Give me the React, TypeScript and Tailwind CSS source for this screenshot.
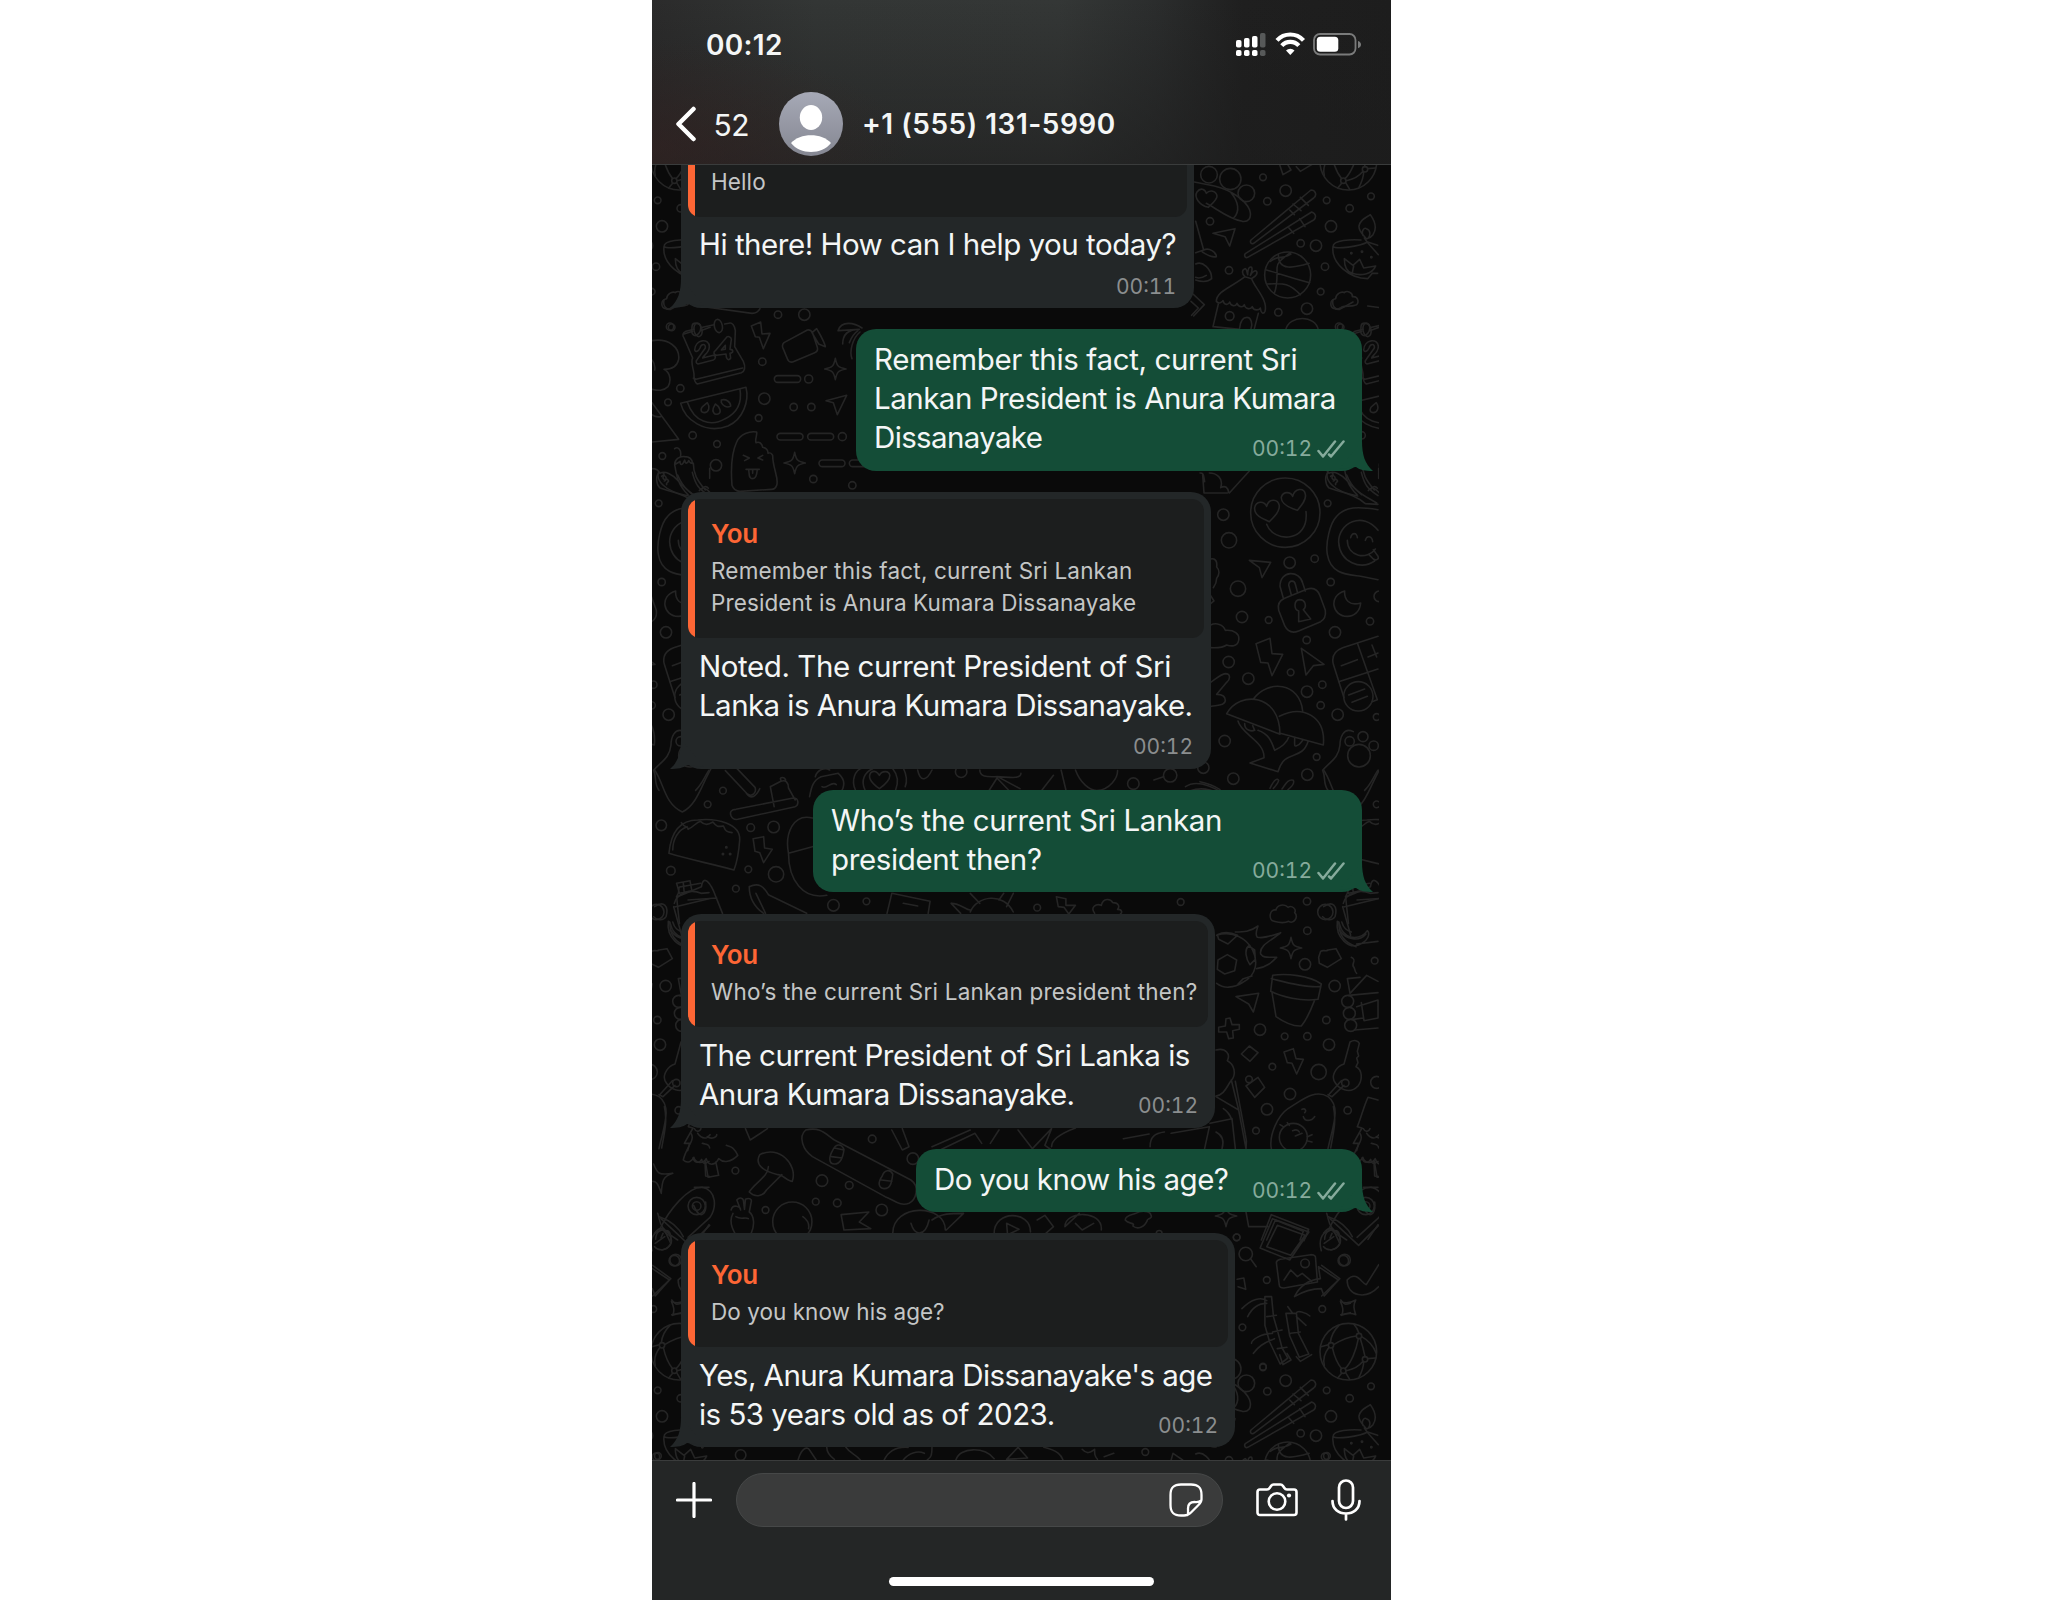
import React from "react";

const STAR = "M0-32C5-8 8-5 32 0 8 5 5 8 0 32-5 8-8 5-32 0-8-5-5-8 0-32z";

function Circles({ at }: { at: number[][] }) {
  return (
    <>
      {at.map(([cx, cy, r]) => (
        <circle key={cx + "-" + cy + "-" + r} cx={cx} cy={cy} r={r} />
      ))}
    </>
  );
}

function Ovals({ at }: { at: number[][] }) {
  return (
    <>
      {at.map(([cx, cy, r]) => (
        <ellipse key={cx + "-" + cy + "-" + r} cx={cx} cy={cy} rx={r} ry={r * 1.44} />
      ))}
    </>
  );
}

function Doodles() {
  return (
    <g id="doodles">
      <g transform="translate(1191 160) scale(.33333)">
        <Circles
          at={[[54, 44, 25], [118, 57, 32], [166, 100, 25], [216, 52, 10], [229, 124, 11], [284, 92, 17], [57, 184, 11], [114, 331, 11], [407, 121, 10], [476, 145, 11], [540, 109, 10], [420, 199, 17], [329, 250, 11], [375, 257, 17], [402, 320, 11], [389, 395, 10], [348, 446, 17], [262, 457, 11], [444, 500, 11], [290, 345, 69], [116, 468, 13], [457, 62, 8], [420, -14, 8], [504, -42, 8], [522, 28, 8], [472, 5, 85]]}
        />
        <path d="M10 66l60 12c50 12 94 42 106 72 8 26-6 36-22 34-40-6-80-40-108-54M128 174c20-20 14-50-8-76M52 142c-26-6-44-30-34-46 10-14 24-10 28 4 10-12 30-8 32 8 0 12-14 22-26 34z" />
        <path d="M266 14l10 30 24-14-12-20M316 20l12 14 34-20" />
        <path d="M360 90c12 0 20 14 8 24L188 250c-8 4-12-4-8-10zM306 132l24 20M328 112l24 24M296 150l14 14" />
        <path d="M362 156c14 4 14 18 6 24L170 292c-8 4-12-8-6-12zM326 176l16 24M294 204l14 16" />
        <path d="M66 220l66-14-16 52-14-28zM14 184l24 86-24 8M38 270c16-8 38 6 38 20-16 4-28-6-42-14M14 312c20-10 48 14 48 44-14 12-30 10-48 4M14 352c10 4 20 2 32-6M6 402l34 32-32 34M0 424l22 20-20 22" />
        <path d="M238 304c30-22 20 0 62-22M262 284c0 50 46 40 92 26M226 330c40 10 60 20 130 38M228 372c40 0 60-10 100 32M250 400c10-26 8-50 8-76 0-20 20-30 40-46" />
        <path d="M162 350c-38 30-86 44-86 74 10 10 16 2 20-2 4 14 16 14 20 4 4 14 18 14 22 4 6 14 20 12 22 4 4 16 20 14 24 6 4 14 22 10 24 4 2 18 10 18 14 10 10-34-32-72-40-98zM162 350c-10-10-10-20 0-24 6 0 6 14 8 18 0-16 4-26 12-22 4 8-2 18-4 24 8-14 18-18 20-8 0 10-12 14-16 18M82 432L66 500l80 8M146 504c2-20 8-32 22-32 12 0 18 20 12 34M190 506l12-46" />
        <path d="M526 236c-10-12-24-24-22-38 4-20 20-24 34-34 14 20 22 40 8 60-6 8-10 10-18 12M516 226c-6-14 4-24 10-20 14 4 12 20 6 28M520 234l10 14 32 36" />
        <path d="M426 260c0-20 56-22 84-20M426 260c10 8 78 0 104-14M426 260c-6 50 50 96 104 96l14-16 16 0M460 296c0 24 10 40 24 44 24 8 60 4 70-22l-36 6-12-26-20 18zM488 318l-4 20M530 246l30 10" />
        <path d="M414-8C400 10 396 30 400 46M424-8C430 20 442 44 452 56M428-16C450-30 476-40 496-42M502-34C496 0 480 40 462 56M512-40C530-30 548-10 556 10M508-34C516-10 520 10 522 20M466 62C490 58 508 44 516 34M530 26L554 24M418-22C420-44 430-60 444-74M504-50C500-62 494-72 488-78M452 70L440 84M464 68L476 88M518 36C518 50 512 66 504 82M412-16L390 -10" />
        <path d="M432 446c-16-2-18-26 2-30 0-12 16-24 26-18 8-8 26 0 24 12 20-2 22 24 8 26-14 6-34-2-44 8-6 4-12 4-16 2z" />
        <path d="M284 510c10-46 90-46 98 0M486 522l26-8M510 500c0-14 24-14 26 0s-10 30-20 26-6-16-6-26zM536 512l28-10" />
        <circle cx="481" cy="280" r="2" />
        <circle cx="513" cy="275" r="2" />
        <circle cx="541" cy="292" r="2" />
      </g>

      <g transform="translate(652 300) scale(.33333)">
        <Circles
          at={[[378, 44, 11], [457, 44, 17], [59, 82, 10], [331, 185, 11], [85, 265, 11], [48, 307, 10], [337, 296, 17], [425, 321, 11], [478, 321, 11], [320, 354, 10], [122, 406, 11], [195, 432, 10], [31, 468, 10], [192, 496, 17], [484, 537, 11], [601, 556, 11], [470, 237, 12], [571, 410, 12]]}
        />
        <path d="M126 88l-24 6c-10 4-12 12-6 20l26 60c-8 14 6 40 4 54 0 12 4 20 10 24l132-34c10-4 14-16 6-34l-26-44 2-48c-2-16-10-26-20-22l-12 2M152 82l34-8M124 234l8 4 140-34" />
        <ellipse cx="138" cy="90" rx="12" ry="20" transform="rotate(-12 138 90)" />
        <ellipse cx="199" cy="78" rx="12" ry="20" transform="rotate(-12 199 78)" />
        <path d="M128 150c2-34 44-36 44-10 0 18-18 26-20 34l32-8c10 2 6 12 0 14l-46 12c-6-2-8-8-2-14l24-34c2-14-12-14-16 0-4 10-14 14-16 6zM222 114c4-8 16-4 16 4l-4 30c10 0 12 10 0 12l2 14c-6 10-14 4-14-12l-28 4c-10-2-10-10-4-14zM220 136l-12 14 12-2z" />
        <path d="M298 78l28-12 4 36 24-2-20 46-12-34-12-2zM396 128l70-38c8-2 14 4 16 10l14 42c2 8-2 14-8 16l-66 28c-8 2-14-4-16-10l-14-34c-2-6 0-10 4-14zM480 98l14-12c10 18 22 36 26 54l-20-8z" />
        <path d={STAR} transform="translate(550 207)" />
        <path d={STAR} transform="translate(428 489)" />
        <path d="M522 302l62-16-28 58-12-36z" />
        <rect x="367" y="227" width="79" height="20" rx="10" />
        <rect x="375" y="400" width="78" height="20" rx="10" />
        <rect x="467" y="400" width="78" height="20" rx="10" />
        <rect x="501" y="480" width="78" height="20" rx="10" />
        <rect x="592" y="480" width="78" height="20" rx="10" />
        <path d="M558 92c10-32 50-24 72-8M572 132c0-28 16-44 50-44M600 176c-8-20 0-60 24-80M560 92l62-4M592 128c8-20 14-28 26-36" />
        <path d="M86 310l196-48c10 40-8 96-54 116-70 26-130-20-142-68zM106 306c20 60 70 76 114 50 36-18 50-50 44-88" />
        <path d="M166 308c8 12 6 28-8 30-14 0-14-14-2-22zM190 312c14 8 20 26 8 30s-18-8-14-18zM208 300c14-4 28 6 28 18-12 8-24-2-28-10z" />
        <path d="M240 556c-4-50 0-100 14-130 10-24 40-34 60-30 2 10-6 22-2 32 10-4 18 2 20 14 10 2 16 8 16 18 8-4 10 0 14 6 0 40 20 70 12 90-4 10-10 12-16 12l-94 6c-12 0-20-6-24-18zM274 466l18 8-14 8M332 466l-14 8 14 6M282 508l40 0M290 508c2 16 0 26 10 28 12 0 14-10 16-28M302 510v10" />
        <path d="M68 446c10-8 20 4 18 20M68 494c0-16 14-26 30-24 14 0 22 8 24 20-10 0-8-4-12-8-4 10-10 10-12-2-6 16-14 18-14 4-4 4-10 6-16 10 6 36 10 60 40 90M124 490c0 30 10 50 36 80M0 506c14 0 18 4 24 14 14-10 38 4 52 20 14 16 30 30 46 44M20 516c-8 20 10 58 90 72M34 520c8 6-8 12 2 18 8 2 6-4 12 2s-8 8-4 14M142 572c8-14 20-8 34 8" />
        <path d="M0 122c50-8 84 20 80 56-4 20-20 30-44 30 20 10 22 36 12 52-14 14-30 12-48 8M0 180c8 10 10 20 8 30M0 308l80 110-80 8M0 344c10 8 16 8 26 6M36 0c-4 16 6 30 20 28l40-22M140 18l160 22c10 0 20-6 24-14" />
      </g>

      <g transform="translate(1200 465) scale(.33333)">
        <Circles
          at={[[256, 143, 104], [70, 149, 17], [87, 226, 23], [114, 371, 23], [126, 456, 17], [206, 465, 10], [269, 293, 17], [344, 281, 11], [383, 115, 10], [392, 351, 11], [405, 502, 17], [320, 525, 11], [510, 469, 11], [538, 394, 16], [86, 591, 17], [145, 641, 17], [272, 622, 10], [321, 680, 17], [367, 659, 11], [362, 721, 11], [413, 749, 17], [74, 828, 17], [350, 876, 10], [322, 929, 17], [100, 941, 17], [530, 756, 10], [449, 829, 14], [489, 815, 15], [521, 842, 14], [477, 872, 34], [475, 694, 44], [10, 908, 17]]}
        />
        <path d="M208 170c-24-10-46-20-44-42 4-20 28-22 36-4 6-24 34-24 38-2 0 20-16 34-30 48zM292 136c-26-8-50-20-48-40 6-18 28-16 34-2 6-24 34-28 38-6 4 16-12 34-24 48zM200 178c20 56 128 56 118-38" />
        <path d="M148 286l64 6-26 46-8-30z" />
        <path d="M250 400l-10-36c0-50 60-48 68-10l8 24M274 390l-8-30c2-16 18-14 20-2l6 22M254 400l68-28c20-6 32 4 38 20l16 44c2 16-4 28-14 34l-66 28c-20 8-34 0-42-16l-18-46c-4-16 0-28 18-36zM296 438c-16-6-14-32 2-34 20 0 22 22 12 30l22 28-36 8z" />
        <path d="M434 378c-50 14-38 76 8 76 20 0 38-14 40-40-34 10-50-10-48-36zM168 536l42-16 6 46 32 2-32 64-12-38-22-2zM304 550l68 48-32 4-22 28z" />
        <path d="M534 134c-60-10-98-10-124 20-20 20-34 80-28 114 10 60 60 60 100 66l52 10M534 196c-46-60-120-20-118 36 4 60 66 84 108 56M452 218c4-16 18-16 20 0M496 226c4-16 20-14 22 4M442 226c0 50 60 60 84 26M506 268l14 14c8 6 18 0 14-8l-14-20" />
        <path d="M534 514l-106 34c-26 10-34 26-28 50l32 100M534 612l-118 38M472 534l60 170-16 6M424 602l48-18M504 576l30-12M516 540l14 36M446 690l48-18M456 712l46-18" />
        <path d="M80 746c40-70 160-60 160 62zM160 702c44-60 140-50 148 36M238 754c70-36 140 0 132 86L238 804M114 768c10 40 80 60 78 110l-42 16 84 26c20-70 70-30 90-90M174 796c30 10 40 30 50 60 20-10 36-20 44-44M134 776c0 20 20 24 30 20l-6-14M284 820c0 20-2 26 6 22 10-2 12-8 18-16" />
        <path d="M460 800c-30-16-40 20-40 40-4 40-30 50-52 76 10 20 0 40 16 60M534 916c-14 20-20 40-40 60" />
        <path d="M32 282c16-4 20 10 18 24 8 8 10 22 0 34 0 12-4 20-10 28M32 392l10 16-10 8M32 480c16-8 38-2 44 16 26-2 44 10 40 30-4 20-24 18-36 14-14 10-30 8-48 8M32 652c16-10 30-24 44-26 16 0 16 16 4 26l-30 36c14 0 26 4 26 18s-20 14-42 18M210 970c14-30 22-30 26-24-2 8-8 16-16 24M246 972c14-20 20-30 34-26 4 8-6 20-16 28M0 950c20 4 40 10 60 24" />
        <path d="M8 30l4 54 70 0M88 84l60-66M0 24c12 0 10 6 14 26M28 24c20 0 44 14 34 44 14-8 22 0 24 14M386 22c-14 10-10 36 0 46 36 14 80 20 110 48l38 2M440 30c20 50 50 60 90 84M484 22c10 40 20 50 50 70M392 34c10-10 20 10 8 14M512 74c4-10 14-12 20-4M536 10v30" />
      </g>

      <g transform="translate(1210 890) scale(.33333)">
        <Circles
          at={[[291, 34, 11], [346, 66, 23], [292, 122, 11], [285, 223, 17], [374, 288, 17], [150, 419, 17], [349, 390, 11], [292, 439, 11], [224, 439, 10], [357, 464, 17], [187, 530, 10], [326, 546, 23], [240, 612, 17], [171, 658, 17], [413, 661, 11], [138, 722, 10], [494, 212, 10], [413, 334, 18], [418, 370, 18], [422, 406, 18], [117, 568, 10], [406, 579, 11], [500, 577, 18], [80, 1042, 10], [250, 742, 42]]}
        />
        <path d="M192 94c-18-4-14-38 6-34 2-16 26-20 36-8 12-8 26 6 20 16 12 12-2 36-18 26-12 6-30 4-44 0z" />
        <path d={STAR} transform="translate(243 174)" />
        <path d="M20 136c100-30 160 100 80 140-30 20-60 20-80 4M24 210l28-16 28 16-6 32-30 10-22-14zM22 134c20-10 40-8 60 2l-28 26-28-14zM116 168c-14 10-8 40 4 56l16-16-2-28zM84 282l16-16 26-8M76 126c24 0 44 0 68-18-4 14-10 24-2 34 20 4 40-4 70-14-20 20-66 36-60 64 10 14 24 8 48 10-14 14-30 30-60 34" />
        <path d="M326 202l6-18c8-6 14 2 22-4l24-4 16 30-42 26-24-12zM188 256c40-6 110 0 146 26l-10 46c-50 8-110-8-142-24zM184 266c40 10 100 28 146 24M186 308l12 72c20 14 50 30 76 28 20-24 30-52 40-78" />
        <path d="M78 320l68-10-16 56-14-24zM48 386l12-2 6 20 22 0 0 14-20 4 2 22-14 2-6-20-24 0 0-14 20-4zM94 492l24-24 26 20-24 26zM222 486l28-10 8 30 22 2-20 44-14-32-14-2zM108 588l36-26 20 30-30 30z" />
        <path d="M400 40c6-30 50-44 80-30l24-2M398 52l106-26M398 50l24 86M440 162l64-8M382 94c6 0 8 16 12 24 20 34 60 30 78 4 10 10 0 30-16 38-40 24-80-20-74-66zM388 120c20 30 60 36 80 12M424 202c20 10-4 20 8 30 4 8 2 14 8 18" />
        <path d="M412 266l38-4M412 266l8 44 50-54 34 18M416 316l88-8M440 350l64-20 0 54-42 8-8-54M434 420l70-6M430 388l30-4" />
        <path d="M420 456c14-8 24-4 28 4l-6 24 4 14-6 6 4 14-6 12c20 10 20 40 6 58-24 26-60 10-72-16-8-20 10-44 30-50zM402 586l-36 34-12-6M394 572l-36 40" />
        <path d="M184 776c-8-40 20-100 50-120 40-24 80-60 120-36 40 30 14 90 0 156M370 650c10 40 0 80-8 124M276 658c10-4 14 4 8 10M300 690c8 0 10-6 14-10M280 680c4 14 14 12 22 10M248 722c10-4 16-4 20 4M256 738l20-8M292 740l14-6M290 752l16 4M210 704l10 6M232 698l6 8" />
        <path d="M18 480c30-8 44 14 34 32 20 10 30 40 10 62-14 20-20 40-44 44M18 620l68 40-22-90M86 660l22 116M76 574l30 160c6 20 4 30 2 42M0 700l66-14 10 90M40 656c16 10 20 20 26 34M18 726c20 10 24 30 18 50" />
        <path d="M504 630l-30-8c-14 30-20 60-32 88l14 4-26 46 16 0-6 22M460 716c6 12 16 10 20 0M456 804c4 14 18 18 26 4 4 20 16 10 22 6M492 816l2 42 12 2M484 760c10 4 20 0 22 14M458 946c20 50 40 24 36-10M460 892l44 0" />
        <path d={STAR} transform="translate(48 978)" />
        <path d="M108 966l8 44 58 0M184 974l112 44-14 34M184 974l-30 76M196 990l84 34-10 26M196 990l-26 60M350 970c10 30 0 40 60 80M504 1004l-30 44M344 1048c0-24 20-34 28-24 12-8 20 10 16 26M360 1044l6-14" />
      </g>

      <g transform="translate(645 620) scale(.4783 .33333)">
        <Ovals at={[[221, 623, 8], [269, 621, 12], [131, 553, 7], [163, 512, 7], [216, 748, 7], [274, 763, 16], [190, 806, 7], [394, 856, 12], [463, 844, 7], [820, 863, 7], [1021, 491, 12], [1120, 846, 7], [1098, 466, 14], [661, 455, 12], [54, 752, 9], [34, 616, 11]]} />
        <path d="M20 450c20 40 20 100 58 126 30-20 40-80 60-130M168 452l46 70c10 10 20-4 16-20l-40-60M212 520c10 20 20 10 28-14M262 500l22-16c10-6 16 4 16 20l14 36M262 500l8 60M284 480c-4-10 8-10 10 0M180 588c-4-14 2-20 10-20l120-34c12 0 12 20 4 26l-120 38c-8 2-12-4-14-10z" />
        <path d="M344 530c4-30 8-50 24-60l36-10c16 20 14 40 4 60M356 470c4-20 20-30 30-20M370 500c10 10 20-20 30-6M440 510c-10-30 0-60 14-66M544 500c6-20 0-44-4-56M460 510c-10-30 0-54 16-64M524 510c8-30 2-50-6-64M490 506c-20-20-24-36-18-48 8-8 14-2 18 8 6-16 20-14 22 0 0 14-10 28-22 40z" />
        <path d="M570 450c6 40 20 30 30 0M700 450c0 24 20 20 36 20 20 0 50 10 50-10M720 510l16-36 24 36M740 472l44 34M830 510l24-44M870 450l10 60M900 450c10 40 30 60 44 62 30-4 44-40 44-60M1064 480l20-10M1130 500c20-20 50-6 80 20M1140 512c20-10 40-6 60 8" />
        <path d="M50 700c4-60 20-100 60-100 40-6 90 10 88 60-2 40-4 60-12 90-50-20-90-30-136-50zM58 690c0-30 10-60 30-70M76 608c10 20 14 10 14 20 14-10 16-20 26-24 10 14 16 10 26 2 8 16 12 14 22 12 4 16 8 18 18 20" />
        <Ovals at={[[170, 682, 1.5], [163, 702, 1.5], [178, 702, 1.5]]} />
        <path d="M226 656l22-6 2 34 16 4-18 40-8-30-10-4zM300 700c-8-60 10-120 50-106M300 700l50-20M300 700c0 80 30 140 80 126" />
        <path d="M66 830c10-20 0-30 10-30l40-10M66 790l28-8 4 30-26 8zM80 788l2 30M66 830l6 80M118 800c4-40 20-10 30 30l14 50M118 800l-50 30M90 840l60-6M218 800c20-14 30 0 40 24l80 56M218 800c0 30 10 60 30 80M232 820l20 60" />
        <path d="M506 880l10-60 80 24-4 36M540 850l30 8M640 850c20 0 30 20 40 20M680 876c14-50 70-60 90 0M640 850l20 30M770 820l-14 40M700 850l-20-30M740 840l10-20M860 830l20 6 0 20 20 0-14 26-10-20-12-2zM940 880c-10-20 4-30 14-24 4-24 20-20 24-8 14 0 14 14 10 20 10 0 10 10 6 14" />
        <path d="M20 860c20-20 30 0 24 30-6 14-20 10-26 0M52 906c0 40 10 60 36 74M58 906c4 20 10 24 20 30" />
      </g>

      <g transform="translate(645 900) scale(.4783 .33333)">
        <Ovals at={[[475, 717, 8], [370, 842, 12], [427, 856, 8], [189, 812, 7], [357, 905, 7], [402, 909, 8], [495, 930, 12], [252, 930, 7], [108, 918, 18], [108, 918, 9], [560, 776, 12], [308, 965, 41]]} />
        <path d="M96 700c10 20-10 40-16 80 10 14 20 0 22-8 4 20 20 20 26 4 4 24 20 20 26 0 10 14 26 10 40-10-10-30-16-24-24-30M110 700c10 20 20 16 26 4M130 710c10 10 20 0 20-6M126 784l6 48 22-6-6-40M210 686l10 34 36-34" />
        <path d="M18 792c8 30 12 34 40 28-22 10-22 24-24 60-8-34-12-36-18-36" />
        <path d="M336 690c30-10 40 10 60 30l160 120c20 20 10 60-4 70-20 10-30-10-50-20L350 770c-20-20-30-60-14-80zM392 752c-8 20-8 40 4 40 14 0 18-20 20-44-6-20-18-16-24 4zM390 770l22 4M396 744l20 6M496 828c-10 20-8 36 4 38 14 0 16-20 18-44-6-16-18-12-22 6zM494 840l22 4" />
        <path d="M240 764c40-30 80 30 68 80-10 0-20-20-30-20-30-10-50-30-38-60zM258 800c0 30-30 50-40 76 14 20 30 10 36-6l32-46" />
        <path d="M30 990c20-60 60-130 90-128 30 10 30 60 16 90l-46 60M30 950c20 10 40 30 50 60M180 930c4-20 20-10 20 0l-8-30c6-10 14-6 14 4l2 24 2-30c8-6 14 0 12 8l-4 30c10 10 12 40 4 64M184 940c-8 20-4 40 4 60M190 950c10 10 20 0 26 6M410 944l58-8-20 30 24 20-56 4z" />
        <path d="M330 950c10 10 14 20 12 36M518 1000c0-90 110-90 110-10M556 970c8 40 30 40 38-10M600 960c20-20 40-20 66-20l-36 50M730 1000c0-70 76-70 76-4M756 970l2 34 24-16zM820 960l16-14 18 34-16 20M878 980c0-50 80-50 76 10M878 980l30-40M900 970l14 20 24-20M1004 960c0-14 16-16 22-20 10-8 30-10 32 6 4 10-10 10-8 16-6 20-20 28-30 16 6-10-10-6-16-18z" />
        <path d="M516 690l22 60 14-10-14-54M600 740l80-50M620 748l70-48 14 30M740 690l-18 40M780 690l30 56 40-60-14 50 14 14M1000 716l54-14M1056 740c0-30 10-40 30-44M1100 700l80-20-10 66M850 740c0-20 20-40 50-56" />
      </g>

      <g transform="translate(645 1200) scale(.4783 .33333)">
        <Ovals at={[[1237, 112, 7], [1256, 162, 14], [1300, 240, 7], [1416, 327, 7], [1460, 182, 11], [1249, 382, 7], [1292, 500, 7], [64, 180, 12], [200, 765, 11], [27, 768, 7], [1046, 756, 7], [1380, 190, 9], [1075, 100, 6]]} />
        <path d="M1312 56l76 40-40 84-62-36zM1322 76l58 30-30 60-50-26zM1266 176l12 24M1328 178l64-14c10 0 10 6 10 12l4 70-70 18c-8 0-10-4-10-10l-6-66c0-6 4-8 8-10zM1336 240l14-30 14 20 10-10 20 24" />
        <path d="M1358 290c10-30 30-50 54-54l-4-36 42 40-30 48-6-22c-20 0-40 10-56 24zM1468 240c20-30 30 10 40 14l26-60M1468 240c0 50 40 60 66 20M1454 304c10 8 20 6 32-4-6 16-4 28 0 44-10-6-20-4-30 2 6-14 2-28-2-42z" />
        <path d="M1296 290l14 0 4 60 8 40 10 54 12 30-16 18-22-66-10-50zM1300 350l20-4M1312 396l20-6M1322 446l20-4M1248 326c20-30 40-36 52-24M1260 350c10-30 24-40 40-40M1340 340l22 0 4 60 22 62-20 10-20-64zM1350 400l20-4M1362 340c0-10 20-4 28 8M1362 350l20 26M1268 430c0-10 20-30 44-30M1272 460c10-20 20-30 44-44M1354 340l-10-20" />
        <path d="M1414 152c-6-30 0-54 16-60 10-10 10 14 20 14 10 20 0 40-16 44M1420 130l20-20M1432 56l60 80 42-60" />
        <path d="M16 196l38 40-38 52M56 300c8 16 10 14 20 10M56 344l20-6M1240 260l16 8-4-34-14 4M20 100c10-20 20-20 24 0l10 30c-6 20-24 26-34 10" />
        <path d="M320 780c8-40 20-40 24-30l14 30M380 742c0 20 10 30 16 36M420 742c10 20 20 20 30 38M500 780c10-30 30-40 50-38M540 780c10-20 30-30 44-20M600 742c0 30-4 30-10 38M650 780c8-40 60-40 80-4M780 742l-24 36 44-4zM834 742c30 10 36 24 40 38M914 748c10 16 16 10 26 0 0 14 0 20 6 30M1100 780l4-20 20 20M960 770l20-10" />
      </g>
    </g>
  );
}

function Wallpaper() {
  return (
    <svg
      className="absolute left-0 top-0 h-[1295px] w-[727px] fill-none stroke-[#252525] stroke-[1.6] [&_*]:[vector-effect:non-scaling-stroke]"
      viewBox="652 165 727 1295"
      strokeLinejoin="round"
      strokeLinecap="round"
    >
      <Doodles />
      <use href="#doodles" x="-669" />
      <use href="#doodles" x="669" />
      <use href="#doodles" y="1190" />
      <use href="#doodles" x="-669" y="1190" />
    </svg>
  );
}

function Line({ children, fit }: { children: React.ReactNode; fit: string }) {
  return <div className={"h-[39.2px] whitespace-pre text-[29.5px] leading-[39.2px] " + fit}>{children}</div>;
}

function Time({ children, mine }: { children: string; mine?: boolean }) {
  return (
    <div className={"flex h-[22px] items-center gap-[5px] text-[21px] leading-[22px] tracking-[0px] tabular-nums " + (mine ? "text-[#86ab9c]" : "text-[#8b8e8f]")}>
      <span>{children}</span>
      {mine && (
        <svg className="h-[18px] w-[28px] fill-none stroke-current stroke-[2.5]" viewBox="0 0 28 18" strokeLinecap="round" strokeLinejoin="round">
          <path d="M1.500 11l4.500 5.500L18 1.500M12 14.500l2 2L26.500 1.500" />
        </svg>
      )}
    </div>
  );
}

function Bubble({ mine, box, children }: { mine?: boolean; box: string; children: React.ReactNode }) {
  return (
    <div className={"relative flex shrink-0 flex-col " + (mine ? "mr-[29px] self-end rounded-[20px] bg-[#144d37] pl-[18px] pr-[17px] pt-[10.5px] " : "ml-[29px] bg-[#232728] ") + box}>
      {mine ? (
        <svg className="absolute -right-[11px] bottom-0 h-[30px] w-[34px] fill-[#144d37]" viewBox="0 0 34 30">
          <path d="M23 0c0 14 3 23 11 30-8 0-13-1-17-4L0 28z" />
        </svg>
      ) : (
        <svg className="absolute -left-[11px] bottom-0 h-[30px] w-[34px] fill-[#232728]" viewBox="0 0 34 30">
          <path d="M11 0c0 14-3 23-11 30 8 0 13-1 17-4l17 2z" />
        </svg>
      )}
      {children}
    </div>
  );
}

function Quote({ box, children }: { box: string; children: React.ReactNode }) {
  return (
    <div className={"mx-[7px] shrink-0 overflow-hidden bg-[#1c1e1e] " + box}>
      <div className="flex h-full">
        <div className="w-[7px] shrink-0 bg-[#fd6635]" />
        <div className="pl-[16px]">{children}</div>
      </div>
    </div>
  );
}

function QuoteLine({ children, fit }: { children: string; fit: string }) {
  return <div className={"h-[32.2px] whitespace-pre text-[22.5px] leading-[32.2px] text-[#c4c6c6] " + fit}>{children}</div>;
}

function You() {
  return <div className="mb-[2.5px] h-[36px] text-[26px] font-semibold leading-[36px] tracking-[-0.3px] text-[#fd6635]">You</div>;
}

function StatusIcons() {
  return (
    <svg className="h-[30px] w-[130px]" viewBox="0 0 130 30">
      <g className="fill-white">
        <rect x="1" y="10" width="5.500" height="7.500" rx="1.800" />
        <rect x="9" y="8" width="5.500" height="9.500" rx="1.800" />
        <rect x="17" y="6" width="5.500" height="11.500" rx="1.800" />
        <rect x="1" y="20" width="5.500" height="6" rx="1.800" />
        <rect x="9" y="20" width="5.500" height="6" rx="1.800" />
        <rect x="17" y="20" width="5.500" height="6" rx="1.800" />
      </g>
      <g className="fill-[#575959]">
        <rect x="25" y="3" width="5.500" height="14.500" rx="1.800" />
        <rect x="25" y="20" width="5.500" height="6" rx="1.800" />
      </g>
      <g className="fill-none stroke-white stroke-[4.200]">
        <path d="M42 10.300a18 18 0 0 1 26.500 0" />
        <path d="M46.800 15.600a11.500 11.500 0 0 1 17 0" />
      </g>
      <path className="fill-white" d="M51 20.500a6 6 0 0 1 8.500 0L55.300 25z" />
      <rect className="fill-none stroke-[#7a7b7b] stroke-[1.800]" x="79" y="4" width="41.500" height="20.500" rx="6" />
      <rect className="fill-white" x="81.800" y="6.800" width="21.500" height="15" rx="3.500" />
      <path className="fill-[#7a7b7b]" d="M123 11c4 1.200 4 6 0 7.200z" />
    </svg>
  );
}

export default function App() {
  return (
    <div className="flex h-[1600px] w-[2045px] justify-center overflow-hidden bg-white pr-[2px] font-['Inter',sans-serif] text-[#f4f6f6]">
      <div className="flex h-[1600px] w-[739px] flex-col overflow-hidden bg-[#0a0a0a]">
        <header className="flex h-[165px] shrink-0 flex-col border-b border-[#3a3c3c] bg-[radial-gradient(ellipse_260px_110px_at_0px_150px,rgba(62,34,32,0.4),transparent),linear-gradient(to_bottom,transparent,rgba(28,28,28,0.6)),linear-gradient(to_right,#2b2b2b,#333635_22%,#343736_55%,#2b2d2d_68%,#1f1f1f_80%,#1d1d1d)]">
          <div className="flex h-[90px] items-center justify-between pl-[54px] pr-[26px]">
            <div className="text-[28px] font-semibold leading-[34px] tracking-[0.3px]">00:12</div>
            <StatusIcons />
          </div>
          <div className="flex h-[68px] items-center pl-[23px]">
            <svg className="h-[36px] w-[22px] fill-none stroke-white stroke-[4.500]" viewBox="0 0 22 36" strokeLinecap="round" strokeLinejoin="round">
              <path d="M18.500 3L3.500 18l15 15" />
            </svg>
            <div className="ml-[16.5px] w-[47.5px] pt-[1px] text-[30px] leading-[36px] tracking-[-0.5px]">52</div>
            <svg className="ml-[18px] h-[64px] w-[64px]" viewBox="0 0 64 64">
              <defs>
                <linearGradient id="avatar" x1="0" y1="0" x2="0" y2="1">
                  <stop offset="0" stopColor="#a6a9b6" />
                  <stop offset="1" stopColor="#858792" />
                </linearGradient>
              </defs>
              <circle cx="32" cy="32" r="32" fill="url(#avatar)" />
              <ellipse cx="32" cy="25.500" rx="11.200" ry="12.500" fill="#fff" />
              <path d="M12 51c9-10.500 31-10.500 40 0-9 12-31 12-40 0z" fill="#fff" />
            </svg>
            <div className="ml-[19px] text-[28px] font-semibold leading-[34px] tracking-[0.52px]">+1 (555) 131-5990</div>
          </div>
        </header>

        <main className="relative flex h-[1295px] shrink-0 flex-col overflow-hidden">
          <Wallpaper />
          <Bubble box="h-[143px] w-[513px] self-start rounded-b-[20px]">
            <Quote box="h-[52px] rounded-b-[12px]">
              <div className="pt-[0.5px]">
                <QuoteLine fit="tracking-[0.1px]">Hello</QuoteLine>
              </div>
            </Quote>
            <div className="mt-[8px] flex flex-col pl-[18px] pr-[18px]">
              <Line fit="tracking-[-0.48px]">Hi there! How can I help you today?</Line>
              <div className="mt-[11.5px] self-end">
                <Time>00:11</Time>
              </div>
            </div>
          </Bubble>

          <Bubble mine box="mt-[21px] h-[142px] w-[506px]">
            <Line fit="tracking-[-0.36px]">Remember this fact, current Sri</Line>
            <Line fit="tracking-[-0.5px]">Lankan President is Anura Kumara</Line>
            <div className="flex justify-between">
              <Line fit="tracking-[-0.65px]">Dissanayake</Line>
              <div className="mt-[20px]">
                <Time mine>00:12</Time>
              </div>
            </div>
          </Bubble>

          <Bubble box="mt-[21px] h-[277px] w-[530px] self-start rounded-[20px] pt-[7px]">
            <Quote box="h-[139px] rounded-[12px]">
              <div className="pt-[17px]">
                <You />
                <QuoteLine fit="tracking-[0.18px]">Remember this fact, current Sri Lankan</QuoteLine>
                <QuoteLine fit="tracking-[0.11px]">President is Anura Kumara Dissanayake</QuoteLine>
              </div>
            </Quote>
            <div className="mt-[8.5px] flex flex-col pl-[18px] pr-[18px]">
              <Line fit="tracking-[-0.43px]">Noted. The current President of Sri</Line>
              <Line fit="tracking-[-0.56px]">Lanka is Anura Kumara Dissanayake.</Line>
              <div className="mt-[11.5px] self-end">
                <Time>00:12</Time>
              </div>
            </div>
          </Bubble>

          <Bubble mine box="mt-[21px] h-[102px] w-[549px]">
            <Line fit="tracking-[-0.36px]">Who’s the current Sri Lankan</Line>
            <div className="flex justify-between">
              <Line fit="tracking-[-0.36px]">president then?</Line>
              <div className="mt-[20px]">
                <Time mine>00:12</Time>
              </div>
            </div>
          </Bubble>

          <Bubble box="mt-[22px] h-[214px] w-[534px] self-start rounded-[20px] pt-[7px]">
            <Quote box="h-[106px] rounded-[12px]">
              <div className="pt-[16px]">
                <You />
                <QuoteLine fit="tracking-[0.21px]">Who’s the current Sri Lankan president then?</QuoteLine>
              </div>
            </Quote>
            <div className="mt-[8.5px] flex flex-col pl-[18px] pr-[17px]">
              <Line fit="tracking-[-0.47px]">The current President of Sri Lanka is</Line>
              <div className="flex justify-between">
                <Line fit="tracking-[-0.57px]">Anura Kumara Dissanayake.</Line>
                <div className="mt-[20.5px]">
                  <Time>00:12</Time>
                </div>
              </div>
            </div>
          </Bubble>

          <Bubble mine box="mt-[21px] h-[63px] w-[446px]">
            <div className="flex justify-between">
              <Line fit="tracking-[-0.55px]">Do you know his age?</Line>
              <div className="mt-[20px]">
                <Time mine>00:12</Time>
              </div>
            </div>
          </Bubble>

          <Bubble box="mt-[21px] h-[214px] w-[554px] self-start rounded-[20px] pt-[7px]">
            <Quote box="h-[107px] rounded-[12px]">
              <div className="pt-[17px]">
                <You />
                <QuoteLine fit="tracking-[0.04px]">Do you know his age?</QuoteLine>
              </div>
            </Quote>
            <div className="mt-[8.5px] flex flex-col pl-[18px] pr-[17px]">
              <Line fit="tracking-[-0.55px]">Yes, Anura Kumara Dissanayake's age</Line>
              <div className="flex justify-between">
                <Line fit="tracking-[-0.52px]">is 53 years old as of 2023.</Line>
                <div className="mt-[20px]">
                  <Time>00:12</Time>
                </div>
              </div>
            </div>
          </Bubble>
        </main>

        <footer className="flex h-[140px] shrink-0 flex-col border-t border-[#3a3c3c] bg-[#242626]">
          <div className="flex h-[78px] items-center pl-[24px] pr-[30px]">
            <svg className="h-[36px] w-[36px] fill-none stroke-white stroke-[3.200]" viewBox="0 0 36 36" strokeLinecap="round">
              <path d="M18 1.500v33M1.500 18h33" />
            </svg>
            <div className="ml-[24px] flex h-[54px] w-[487px] items-center justify-end rounded-full border border-[#464848] bg-[#3a3b3b] pr-[19px]">
              <svg className="h-[34px] w-[34px] fill-none stroke-white stroke-[2.300]" viewBox="0 0 34 34" strokeLinecap="round" strokeLinejoin="round">
                <path d="M32.500 16.500V12C32.500 4.500 29.500 1.500 22 1.500H12C4.500 1.500 1.500 4.500 1.500 12v10c0 7.500 3 10.500 10.500 10.500h3c3 0 5-1 7-3l7-7c2-2 3.500-4 3.500-6zM18.500 32c1-2 .5-4 .5-6.500 0-4.500 2-6.500 6.500-6.500 2.500 0 5 .5 6.500-1.500" />
              </svg>
            </div>
            <svg className="ml-[33px] h-[34px] w-[42px] fill-none stroke-white stroke-[2.600]" viewBox="0 0 42 34" strokeLinejoin="round">
              <path d="M4 6.500h7c1.500 0 2-.5 2.800-1.800L15 3c.7-1 1.300-1.500 2.500-1.500h7c1.200 0 1.800.5 2.500 1.500l1.200 1.700C29 6 29.500 6.500 31 6.500h7c1.500 0 2.500 1 2.500 2.500v20.500c0 1.500-1 2.500-2.500 2.500H4c-1.500 0-2.500-1-2.500-2.500V9C1.500 7.500 2.500 6.500 4 6.500z" />
              <circle cx="21" cy="18.500" r="8.300" />
              <circle cx="33" cy="12.500" r="2.100" className="fill-white stroke-none" />
            </svg>
            <svg className="ml-auto h-[42px] w-[30px] fill-none stroke-white stroke-[2.700]" viewBox="0 0 30 42" strokeLinecap="round">
              <rect x="8" y="1.500" width="14" height="27.500" rx="7" />
              <path d="M1.500 22c0 8 6 12.500 13.500 12.500S28.500 30 28.500 22M15 34.500v6" />
            </svg>
          </div>
          <div className="mt-[38px] flex h-[9px] justify-center">
            <div className="h-[9px] w-[265px] rounded-full bg-white" />
          </div>
        </footer>
      </div>
    </div>
  );
}
